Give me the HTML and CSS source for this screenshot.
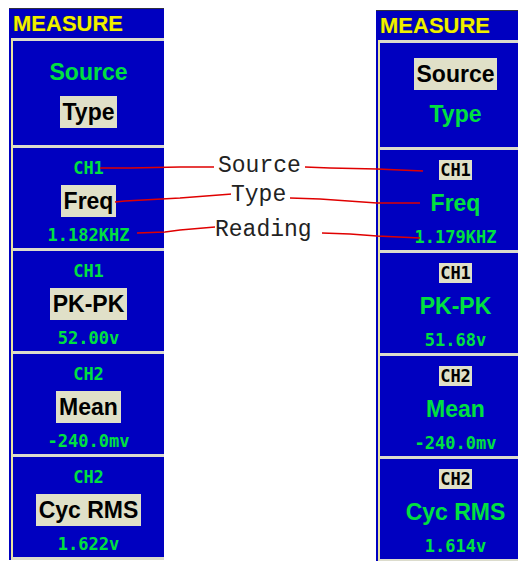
FILE: index.html
```html
<!DOCTYPE html>
<html lang="en">

<head>
    <meta charset="UTF-8">
    <title>Measure menu</title>
    <link rel="stylesheet" href="styles.css">
</head>

<body>
    <div class="page">
        <div class="menu menu-left">
            <div class="menu-title">MEASURE</div>
            <div class="menu-body">
                <div class="item item-top">
                    <span class="label">Source</span>
                    <span class="label hl">Type</span>
                </div>
                <div class="item">
                    <span class="ch">CH1</span>
                    <span class="label hl">Freq</span>
                    <span class="value">1.182KHZ</span>
                </div>
                <div class="item">
                    <span class="ch">CH1</span>
                    <span class="label hl">PK-PK</span>
                    <span class="value">52.00v</span>
                </div>
                <div class="item">
                    <span class="ch">CH2</span>
                    <span class="label hl">Mean</span>
                    <span class="value">-240.0mv</span>
                </div>
                <div class="item">
                    <span class="ch">CH2</span>
                    <span class="label hl">Cyc RMS</span>
                    <span class="value">1.622v</span>
                </div>
            </div>
        </div>

        <div class="menu menu-right">
            <div class="menu-title">MEASURE</div>
            <div class="menu-body">
                <div class="item item-top">
                    <span class="label hl">Source</span>
                    <span class="label">Type</span>
                </div>
                <div class="item">
                    <span class="ch hl">CH1</span>
                    <span class="label">Freq</span>
                    <span class="value">1.179KHZ</span>
                </div>
                <div class="item">
                    <span class="ch hl">CH1</span>
                    <span class="label">PK-PK</span>
                    <span class="value">51.68v</span>
                </div>
                <div class="item">
                    <span class="ch hl">CH2</span>
                    <span class="label">Mean</span>
                    <span class="value">-240.0mv</span>
                </div>
                <div class="item">
                    <span class="ch hl">CH2</span>
                    <span class="label">Cyc RMS</span>
                    <span class="value">1.614v</span>
                </div>
            </div>
        </div>

        <!-- callout lines between the two menus -->
        <svg class="callouts" width="518" height="561" viewBox="0 0 518 561">
            <polyline points="100,168 130,168 180,167 214,167" />
            <polyline points="305,167 330,168 377,169 423,171" />
            <polyline points="115,202 125,201 180,198 232,194" />
            <polyline points="290,198 320,199 377,203 420,203" />
            <polyline points="137,233 165,232 180,230 215,227" />
            <polyline points="322,233 350,234 377,236 420,238" />
        </svg>
        <span class="tag tag-source">Source</span>
        <span class="tag tag-type">Type</span>
        <span class="tag tag-reading">Reading</span>
    </div>
</body>

</html>
```

FILE: styles.css
```css
body {
    margin: 0;
    background: #ffffff;
}

.page {
    position: relative;
    width: 518px;
    height: 561px;
    overflow: hidden;
    display: flex;
    align-items: flex-start;
    justify-content: space-between;
    padding-left: 9px;
    box-sizing: border-box;
}

.menu {
    width: 155px;
    flex-shrink: 0;
    background: #0000c0;
    border-top: 1px solid #303040;
    font-family: "Liberation Sans", Arial, sans-serif;
}

.menu-left {
    margin-top: 8px;
}

.menu-right {
    margin-top: 10px;
    margin-right: -13px;
}

.menu-title {
    height: 29px;
    line-height: 30px;
    padding-left: 4px;
    font-size: 22px;
    font-weight: bold;
    color: #f0f000;
    text-shadow: 0 0 1px #404000;
}

.menu-body {
    margin-left: 2px;
    border-left: 2px solid #e8e4a0;
    border-bottom: 3px solid #dcdccc;
}

.item {
    height: 90px;
    border-top: 3px solid #dcdccc;
    display: flex;
    flex-direction: column;
    align-items: center;
    padding-top: 10px;
}

.item-top {
    height: 89px;
    padding-top: 15px;
    gap: 8px;
}

.label {
    height: 32px;
    line-height: 32px;
    padding: 0 3px;
    font-size: 23px;
    font-weight: bold;
    color: #00e040;
}

.item .label {
    margin-top: 7px;
}

.item-top .label {
    margin-top: 0;
}

.ch {
    height: 20px;
    line-height: 20px;
    padding: 0 1px;
    font-family: "DejaVu Sans Mono", monospace;
    font-size: 17px;
    font-weight: bold;
    color: #00e040;
}

.value {
    margin-top: 8px;
    height: 20px;
    line-height: 20px;
    font-family: "DejaVu Sans Mono", monospace;
    font-size: 17px;
    font-weight: bold;
    color: #00e040;
}

.hl {
    background: #e0e0c8;
    color: #000000;
}

.callouts {
    position: absolute;
    left: 0;
    top: 0;
    fill: none;
    stroke: #e00000;
    stroke-width: 1.3;
}

.tag {
    position: absolute;
    font-family: "Liberation Mono", "Courier New", monospace;
    font-size: 23px;
    line-height: 26px;
    color: #222222;
    background: #ffffff;
}

.tag-source {
    left: 218px;
    top: 153px;
}

.tag-type {
    left: 231px;
    top: 182px;
}

.tag-reading {
    left: 215px;
    top: 217px;
}
```
